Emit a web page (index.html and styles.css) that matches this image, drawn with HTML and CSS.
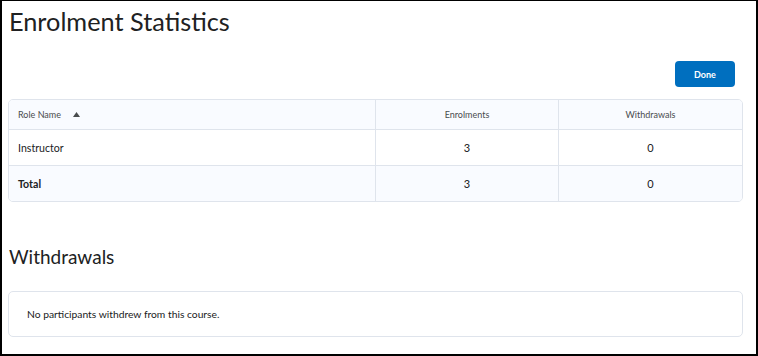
FILE: index.html
```html
<!DOCTYPE html>
<html lang="en">
<head>
    <meta charset="UTF-8">
    <meta name="viewport" content="width=device-width, initial-scale=1.0">
    <title>Enrolment Statistics</title>
    <link rel="stylesheet" href="styles.css">
</head>
<body>
    <div class="frame">
        <h1 class="pageTitle">Enrolment Statistics</h1>
        <div class="actions">
            <button class="doneButton">Done</button>
        </div>
        <div class="tableWrap">
            <table class="stats">
                <thead>
                    <tr>
                        <th class="roleCol">
                            Role Name
                            <svg class="sortIcon" width="7" height="5" viewBox="0 0 7 5">
                                <path d="M3.5 0 7 5H0z" fill="#494c4e"/>
                            </svg>
                        </th>
                        <th class="numCol">Enrolments</th>
                        <th class="numCol">Withdrawals</th>
                    </tr>
                </thead>
                <tbody>
                    <tr>
                        <td>Instructor</td>
                        <td class="num">3</td>
                        <td class="num">0</td>
                    </tr>
                    <tr class="totalRow">
                        <td>Total</td>
                        <td class="num">3</td>
                        <td class="num">0</td>
                    </tr>
                </tbody>
            </table>
        </div>
        <h2 class="sectionTitle">Withdrawals</h2>
        <div class="emptyBox">No participants withdrew from this course.</div>
    </div>
</body>
</html>
```

FILE: styles.css
```css
html, body{
    margin: 0;
    padding: 0;
    background-color: #fff;
}
.frame{
    box-sizing: border-box;
    width: 758px;
    height: 356px;
    border: 2px solid #000;
    border-top-width: 1px;
    padding: 0 13px 0 6px;
    font-family: Lato, "Open Sans", sans-serif;
    color: #202122;
}
.pageTitle{
    margin: 0;
    padding-top: 5px;
    padding-left: 1px;
    font-size: 25.3px;
    font-weight: 400;
    line-height: 30px;
}
.actions{
    display: flex;
    justify-content: flex-end;
    margin-top: 25px;
    padding-right: 8px;
}
.doneButton{
    width: 60px;
    height: 26px;
    border: none;
    border-radius: 4px;
    background-color: #006fbf;
    color: #fff;
    font-family: Lato, sans-serif;
    font-size: 9px;
    font-weight: 700;
}
.tableWrap{
    margin-top: 12px;
    border: 1px solid #dfe4ec;
    border-radius: 5px;
    overflow: hidden;
}
.stats{
    width: 100%;
    border-collapse: collapse;
}
.stats th{
    height: 29px;
    padding: 0 0 0 9px;
    background-color: #f9fbff;
    font-size: 9px;
    font-weight: 400;
    color: #494c4e;
    text-align: left;
    border-bottom: 1px solid #dfe4ec;
}
.stats th.numCol{
    text-align: center;
    padding: 0;
    border-left: 1px solid #dfe4ec;
}
.roleCol{
    width: 357px;
}
.stats th.numCol:nth-child(2){
    width: 182px;
}
.sortIcon{
    margin-left: 10px;
    vertical-align: 1px;
}
.stats td{
    height: 35px;
    padding: 0 0 0 9px;
    font-size: 10.6px;
    color: #202122;
    border-bottom: 1px solid #dfe4ec;
}
.stats td.num{
    padding: 0;
    font-size: 11px;
    text-align: center;
    border-left: 1px solid #dfe4ec;
}
.stats tr:last-child td{
    border-bottom: none;
}
.totalRow td{
    background-color: #f9fbff;
}
.totalRow td:first-child{
    font-weight: 700;
}
.sectionTitle{
    margin: 43px 0 0 1px;
    font-size: 19px;
    font-weight: 400;
    line-height: 24px;
}
.emptyBox{
    margin-top: 22px;
    height: 44px;
    line-height: 44px;
    padding-left: 18px;
    border: 1px solid #dfe4ec;
    border-radius: 5px;
    font-size: 10.3px;
    color: #202122;
}
```
